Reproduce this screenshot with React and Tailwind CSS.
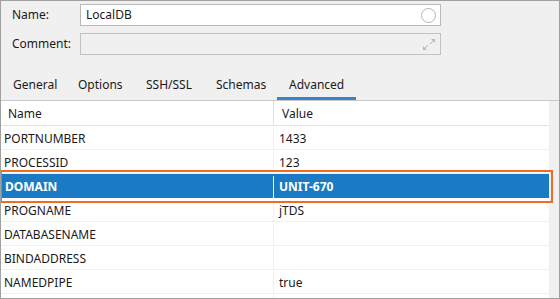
import React from "react";

const rows = [
  { name: "PORTNUMBER", value: "1433" },
  { name: "PROCESSID", value: "123" },
  { name: "DOMAIN", value: "UNIT-670", selected: true },
  { name: "PROGNAME", value: "jTDS" },
  { name: "DATABASENAME", value: "" },
  { name: "BINDADDRESS", value: "" },
  { name: "NAMEDPIPE", value: "true" },
  { name: "", value: "" },
];

const tabs = [
  { label: "General", w: "w-[65px]" },
  { label: "Options", w: "w-[68px]" },
  { label: "SSH/SSL", w: "w-[70px]" },
  { label: "Schemas", w: "w-[73px]" },
  { label: "Advanced", w: "w-[79px]", active: true },
];

function ExpandIcon() {
  return (
    <svg width="14" height="13" viewBox="0 0 14 13" className="text-[#b8b8b8]">
      <path d="M8 6 L12 2" stroke="currentColor" strokeWidth="1" fill="none" />
      <path d="M9 1 L13 1 L13 5 Z" fill="currentColor" />
      <path d="M6 7 L2 11" stroke="currentColor" strokeWidth="1" fill="none" />
      <path d="M1 8 L1 12 L5 12 Z" fill="currentColor" />
    </svg>
  );
}

export default function App() {
  return (
    <div
      className="relative w-[560px] h-[299px] overflow-hidden border border-[#a0a0a0] bg-[#f0f0f0] text-[12px] text-[#1a1a1a] flex flex-col"
      style={{ fontFamily: '"Noto Sans", "Open Sans", sans-serif' }}
    >
      {/* Connection form */}
      <div className="pt-[3px] flex flex-col gap-[7px] shrink-0">
        <div className="flex items-center h-[22px]">
          <span className="w-[79px] pl-[11px]">Name:</span>
          <div className="w-[361px] h-[22px] bg-white border border-[#b9b9b9] flex items-center justify-between pl-[5px] pr-[4px]">
            <span>LocalDB</span>
            <span className="w-[15px] h-[15px] rounded-full border border-[#b4b4b4]" />
          </div>
        </div>
        <div className="flex items-center h-[22px]">
          <span className="w-[79px] pl-[11px]">Comment:</span>
          <div className="w-[361px] h-[22px] bg-[#f0f0f0] border border-[#c2c2c2] flex items-center justify-end pr-[4px]">
            <ExpandIcon />
          </div>
        </div>
      </div>

      {/* Tabs */}
      <div className="mt-[15px] flex h-[31px] shrink-0 border-b border-[#c8c8c8]">
        {tabs.map((t) => (
          <div
            key={t.label}
            className={`${t.w} pl-[12px] flex items-center ${
              t.active ? "border-b-[3px] border-[#3c82c8] pt-[3px]" : ""
            }`}
          >
            {t.label}
          </div>
        ))}
      </div>

      {/* Properties table */}
      <div className="flex flex-1 min-h-0">
        <div className="w-[548px] bg-white flex flex-col">
          <div className="flex h-[25px] shrink-0 border-b border-[#e2e2e2]">
            <div className="w-[273px] pl-[7px] pt-[2px] flex items-center border-r border-[#e2e2e2]">Name</div>
            <div className="pl-[8px] pt-[2px] flex items-center">Value</div>
          </div>
          {rows.map((r, i) =>
            r.selected ? (
              <div key={i} className="flex h-[24px] shrink-0 pt-[2px] bg-[#1a7bc4] text-white font-bold">
                <div className="w-[273px] pl-[4px] flex items-center border-r border-white">{r.name}</div>
                <div className="pl-[5px] flex items-center">{r.value}</div>
              </div>
            ) : (
              <div key={i} className="flex h-[24px] shrink-0 pt-[2px] border-b border-[#f0f0f0]">
                <div className="w-[273px] pl-[3px] flex items-center border-r border-[#f0f0f0]">{r.name}</div>
                <div className="pl-[5px] flex items-center">{r.value}</div>
              </div>
            )
          )}
        </div>
        <div className="flex-1 bg-[#f0f0f0]" />
      </div>

      {/* highlight annotation */}
      <div className="absolute left-[-1px] top-[169px] w-[553px] h-[33px] border-2 border-[#f26a25] pointer-events-none" />
    </div>
  );
}
